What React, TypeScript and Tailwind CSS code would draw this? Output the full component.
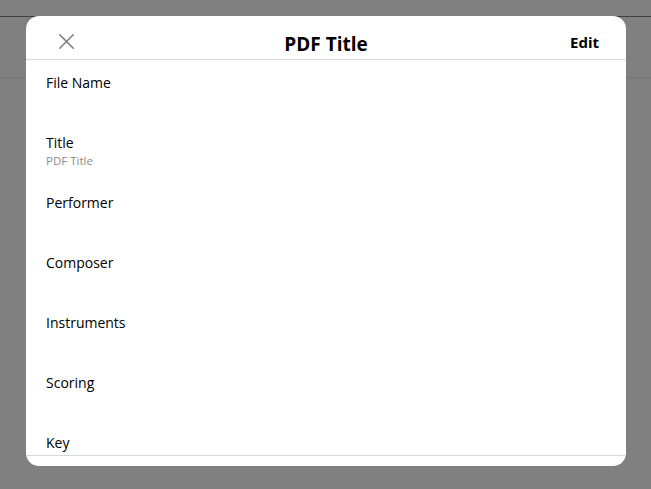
import { X } from "lucide-react";

const fields = [
  { label: "File Name" },
  { label: "Title", value: "PDF Title" },
  { label: "Performer" },
  { label: "Composer" },
  { label: "Instruments" },
  { label: "Scoring" },
  { label: "Key" },
];

export default function App() {
  return (
    <div
      className="relative h-[489px] w-[651px] overflow-hidden bg-[#808080]"
      style={{ fontFamily: '"Open Sans", "Noto Sans", sans-serif' }}
    >
      {/* page behind the overlay */}
      <div className="h-[17px] border-b border-[#404040]" />
      <div className="h-[61px] border-b border-[#737373]" />

      {/* modal */}
      <div className="absolute left-[26px] top-[16px] flex h-[450px] w-[600px] flex-col overflow-hidden rounded-[13px] bg-white">
        <div className="relative flex h-[44px] shrink-0 items-center justify-center border-b border-[#d9d9d9] pt-[14px]">
          <button className="absolute left-[27px] top-[12px] text-[#7a7a7a]">
            <X size={27} strokeWidth={1.3} />
          </button>
          <h1 className="text-[19px] font-bold text-black">PDF Title</h1>
          <button className="absolute right-[27px] top-[15px] text-[15px] font-bold text-black">
            Edit
          </button>
        </div>

        <div className="flex-1 overflow-hidden">
          {fields.map((f) => (
            <div key={f.label} className="h-[60px] px-5 pt-[13px]">
              <div className="text-[14px] leading-[20px] text-black">{f.label}</div>
              {f.value && (
                <div className="text-[11.5px] leading-[15px] text-[#8a8a8a]">{f.value}</div>
              )}
            </div>
          ))}
        </div>

        <div className="h-[11px] shrink-0 border-t border-[#d9d9d9]" />
      </div>
    </div>
  );
}
